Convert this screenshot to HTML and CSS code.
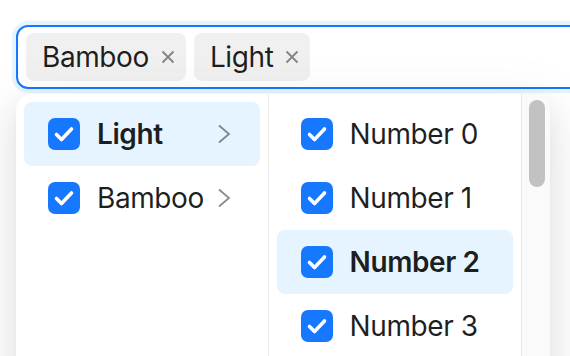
FILE: index.html
```html
<!DOCTYPE html>
<html>
<head>
	<meta charset="UTF-8">
	<title>Cascader</title>
	<link rel="stylesheet" href="styles.css">
</head>
<body>
	<div class="cascader">
		<div class="selector">
			<span class="tag">
				<span class="tag-label">Bamboo</span>
				<svg class="tag-close" viewBox="0 0 14 14"><path d="M1.5 1.5 L12.5 12.5 M12.5 1.5 L1.5 12.5"/></svg>
			</span>
			<span class="tag">
				<span class="tag-label">Light</span>
				<svg class="tag-close" viewBox="0 0 14 14"><path d="M1.5 1.5 L12.5 12.5 M12.5 1.5 L1.5 12.5"/></svg>
			</span>
		</div>
		<div class="dropdown">
			<ul class="menu menu-first">
				<li class="item active">
					<span class="check"><svg viewBox="0 0 32 32"><path d="M8.5 16.5 L13.5 21.5 L23.5 11"/></svg></span>
					<span class="label">Light</span>
					<svg class="arrow" viewBox="0 0 14 20"><path d="M2 1.5 L12 10 L2 18.5"/></svg>
				</li>
				<li class="item">
					<span class="check"><svg viewBox="0 0 32 32"><path d="M8.5 16.5 L13.5 21.5 L23.5 11"/></svg></span>
					<span class="label">Bamboo</span>
					<svg class="arrow" viewBox="0 0 14 20"><path d="M2 1.5 L12 10 L2 18.5"/></svg>
				</li>
			</ul>
			<ul class="menu menu-last">
				<li class="item">
					<span class="check"><svg viewBox="0 0 32 32"><path d="M8.5 16.5 L13.5 21.5 L23.5 11"/></svg></span>
					<span class="label">Number 0</span>
				</li>
				<li class="item">
					<span class="check"><svg viewBox="0 0 32 32"><path d="M8.5 16.5 L13.5 21.5 L23.5 11"/></svg></span>
					<span class="label">Number 1</span>
				</li>
				<li class="item active">
					<span class="check"><svg viewBox="0 0 32 32"><path d="M8.5 16.5 L13.5 21.5 L23.5 11"/></svg></span>
					<span class="label">Number 2</span>
				</li>
				<li class="item">
					<span class="check"><svg viewBox="0 0 32 32"><path d="M8.5 16.5 L13.5 21.5 L23.5 11"/></svg></span>
					<span class="label">Number 3</span>
				</li>
			</ul>
			<div class="scrollbar"><div class="thumb"></div></div>
		</div>
	</div>
</body>
</html>
```

FILE: styles.css
```css
body {
	margin: 0;
	padding: 25px 0 0 16px;
	overflow: hidden;
	background: #fff;
	font-family: Inter, "Noto Sans", sans-serif;
	font-size: 28px;
	letter-spacing: -0.4px;
	color: rgba(0, 0, 0, 0.88);
}
.selector {
	box-sizing: border-box;
	width: 620px;
	height: 64px;
	padding: 6px 8px;
	display: flex;
	align-items: center;
	gap: 8px;
	border: 2px solid #1677ff;
	border-radius: 12px;
	box-shadow: 0 0 0 4px rgba(5, 145, 255, 0.1);
}
.tag {
	box-sizing: border-box;
	height: 48px;
	display: flex;
	align-items: center;
	padding: 0 11px 0 16px;
	background: rgba(0, 0, 0, 0.06);
	border-radius: 8px;
	line-height: 44px;
}
.tag-close {
	width: 14px;
	height: 14px;
	margin-left: 12px;
	fill: none;
	stroke: rgba(0, 0, 0, 0.45);
	stroke-width: 1.8;
}
.dropdown {
	display: flex;
	width: 534px;
	height: 360px;
	margin-top: 5px;
	background: #fff;
	border-radius: 16px;
	box-shadow: 0 12px 32px 0 rgba(0, 0, 0, 0.08), 0 6px 12px -8px rgba(0, 0, 0, 0.12), 0 18px 56px 16px rgba(0, 0, 0, 0.05);
	overflow: hidden;
}
.menu {
	box-sizing: border-box;
	margin: 0;
	padding: 8px;
	list-style: none;
	width: 253px;
	overflow: hidden;
}
.menu-first {
	border-right: 1px solid #ececec;
}
.item {
	display: flex;
	align-items: center;
	height: 64px;
	padding: 0 24px;
	border-radius: 8px;
}
.item.active {
	background: #e6f4ff;
	font-weight: 600;
}
.check {
	flex: none;
	width: 32px;
	height: 32px;
	margin-right: 17px;
	border-radius: 7px;
	background: #1677ff;
}
.check svg {
	display: block;
	width: 32px;
	height: 32px;
	fill: none;
	stroke: #fff;
	stroke-width: 3.6;
	stroke-linecap: round;
	stroke-linejoin: round;
}
.label {
	flex: 1;
	white-space: nowrap;
}
.arrow {
	flex: none;
	width: 14px;
	height: 20px;
	margin-right: 5px;
	fill: none;
	stroke: rgba(0, 0, 0, 0.45);
	stroke-width: 1.8;
}
.scrollbar {
	width: 28px;
	border-left: 1px solid #e6e6e6;
	background: #fafafa;
}
.thumb {
	width: 16px;
	height: 87px;
	margin: 6px 0 0 7px;
	border-radius: 8px;
	background: #c2c2c2;
}
```
